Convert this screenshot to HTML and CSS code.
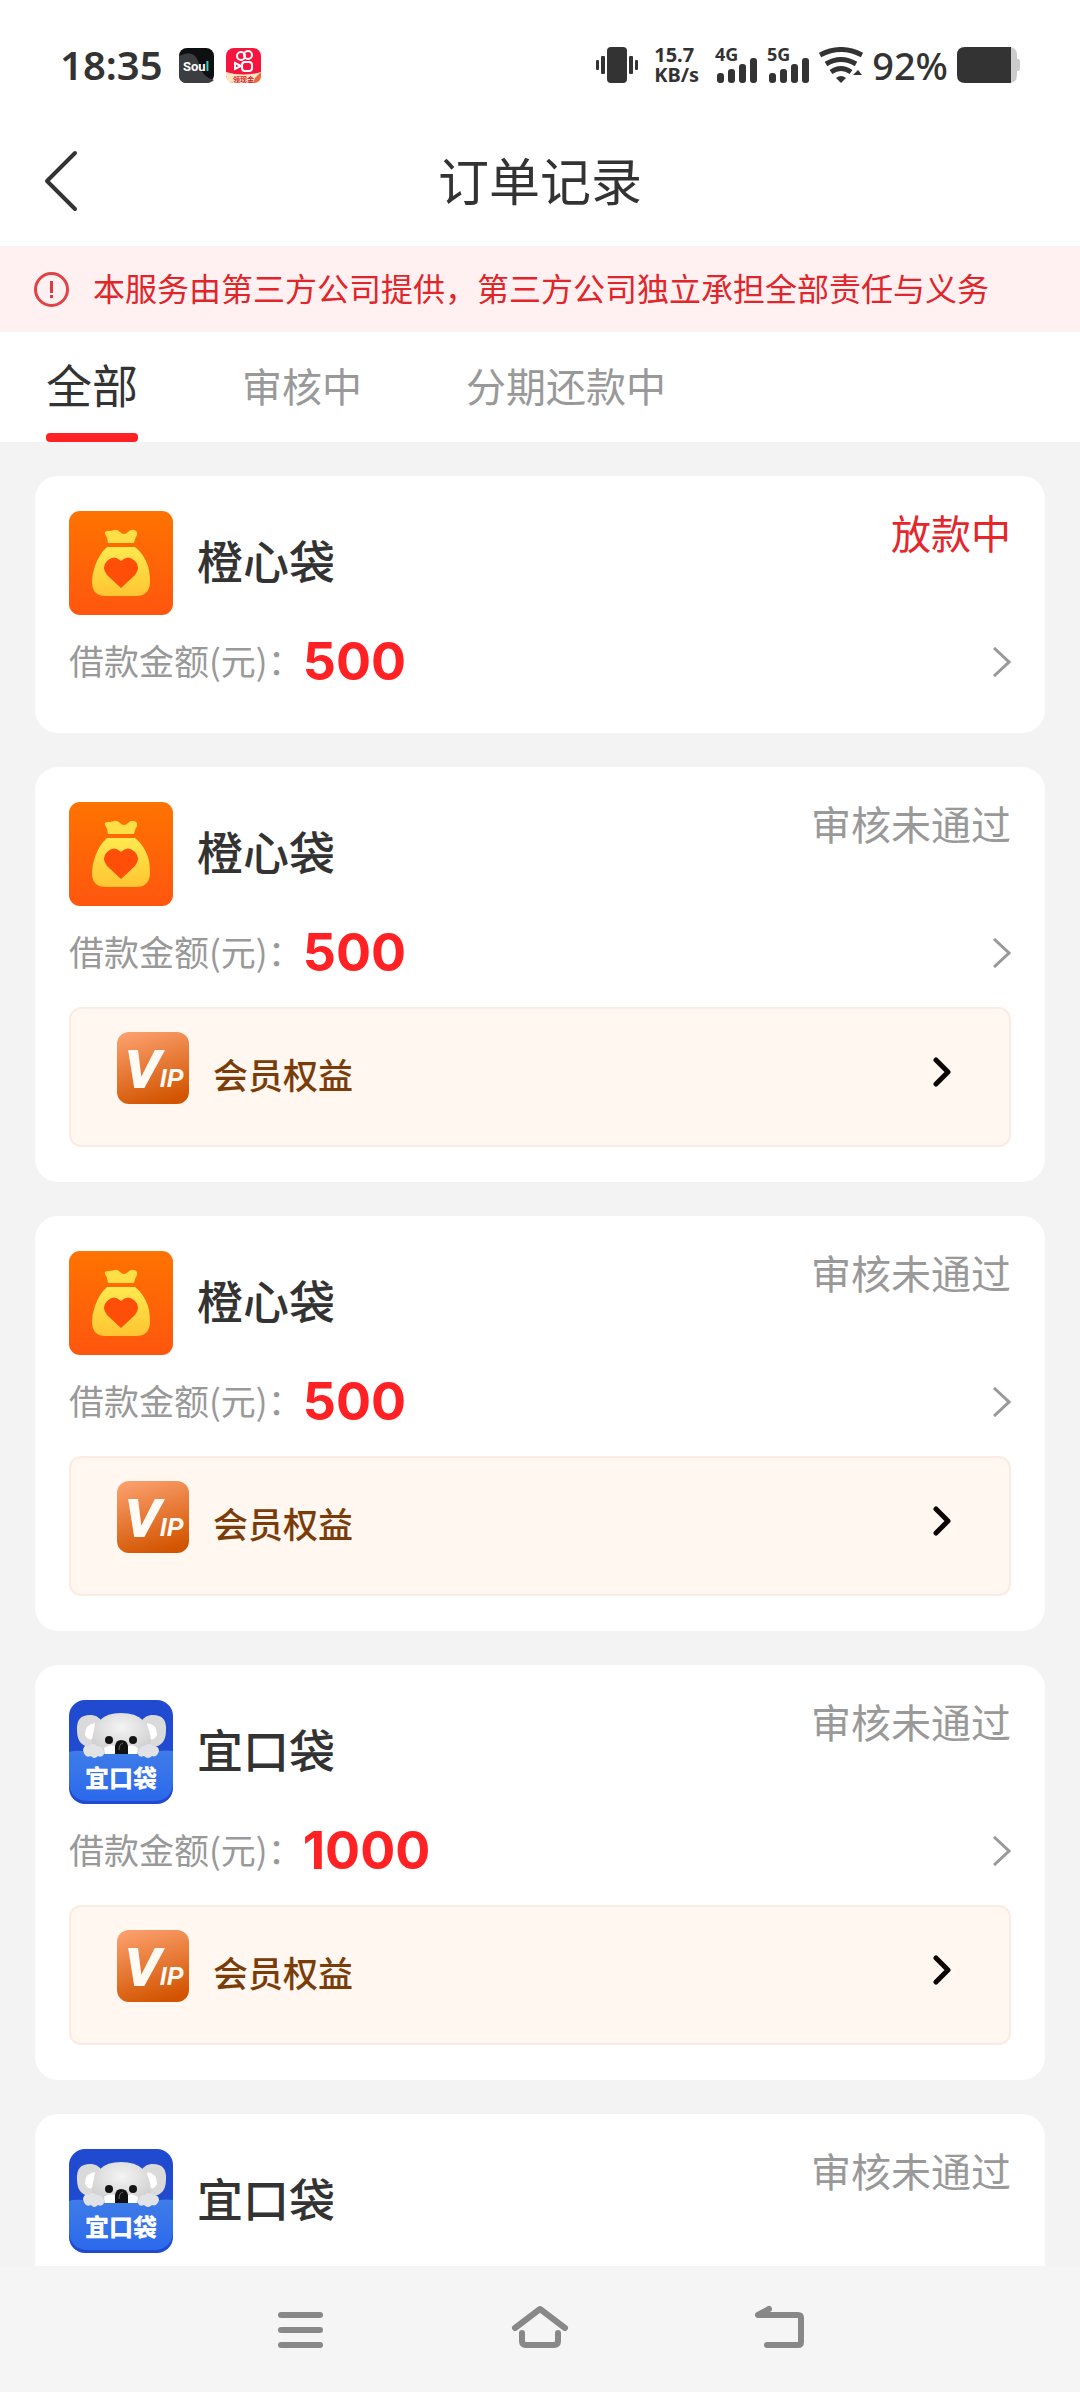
FILE: index.html
```html
<!DOCTYPE html>
<html lang="zh-CN">
<head>
    <meta charset="UTF-8">
    <meta name="viewport" content="width=device-width, initial-scale=1.0">
    <title>订单记录</title>
    <link rel="stylesheet" href="styles.css">
</head>
<body>

    <!-- Shared icons -->
    <svg class="sprite" width="0" height="0" aria-hidden="true">
        <defs>
            <linearGradient id="orangeBg" x1="0" y1="0" x2="0" y2="1">
                <stop offset="0" stop-color="#ff7300"/>
                <stop offset="1" stop-color="#ff560f"/>
            </linearGradient>
            <linearGradient id="bagFill" x1="0" y1="0" x2="0" y2="1">
                <stop offset="0" stop-color="#ffe94f"/>
                <stop offset="1" stop-color="#ffc531"/>
            </linearGradient>
            <linearGradient id="vipBg" x1="0.3" y1="0" x2="0.6" y2="1">
                <stop offset="0" stop-color="#fa9d69"/>
                <stop offset="1" stop-color="#d25400"/>
            </linearGradient>
            <linearGradient id="pocketFill" x1="0" y1="0" x2="0" y2="1">
                <stop offset="0" stop-color="#3e7ce8"/>
                <stop offset="1" stop-color="#2c69ec"/>
            </linearGradient>
            <radialGradient id="furFill" cx="0.5" cy="0.35" r="0.65">
                <stop offset="0" stop-color="#f4f4f4"/>
                <stop offset="1" stop-color="#cfcfd1"/>
            </radialGradient>
        </defs>

        <symbol id="icon-orange" viewBox="0 0 104 104">
            <rect width="104" height="104" rx="11" fill="url(#orangeBg)"/>
            <path d="M36 23 Q35 20 39 20 Q43 20 45 19 Q48 18 51 21 Q55 25 59 21 Q62 18 65 19 Q69 20 68 24 Q66 27 65 32 H39 Q39 27 36 23Z" fill="#ffdf45"/>
            <path d="M38 36 H66 Q75 43 79 55 Q81 62 81 72 Q80 85 67 85 H37 Q23 85 23 71 Q23 63 26 55 Q30 43 38 36Z" fill="url(#bagFill)"/>
            <path d="M52 77 L38 64 Q32 56 38 50 Q45 43 52 50 Q59 43 66 50 Q72 56 66 64Z" fill="#ff4e08"/>
        </symbol>

        <symbol id="icon-koala" viewBox="0 0 104 104">
            <rect width="104" height="104" rx="16" fill="#204bd0"/>
            <path d="M0 52 Q6 50 14 51 H90 Q98 50 104 51 V84 Q102 101 84 101 H20 Q2 101 0 84Z" fill="url(#pocketFill)"/>
            <path d="M8 30 Q7 14 23 15 Q33 16 34 28 L30 48 Q17 48 13 44 Q8 40 8 30Z" fill="#dadadb"/>
            <path d="M97 30 Q98 14 82 15 Q72 16 71 28 L75 48 Q88 48 92 44 Q97 40 97 30Z" fill="#dadadb"/>
            <path d="M16 35 Q16 24 26 23 L24 38 Q20 42 16 35Z" fill="#fff"/>
            <path d="M88 35 Q88 24 78 23 L80 38 Q84 42 88 35Z" fill="#fff"/>
            <path d="M23 42 Q24 13 52 13 Q81 13 82 42 Q81 54 68 54 H36 Q23 54 23 42Z" fill="url(#furFill)"/>
            <path d="M35 48 Q42 43 47 47 L46 54 H36Z M69 48 Q62 43 58 47 L59 54 H68Z" fill="#fff"/>
            <path d="M14 50 Q15 44 20 46 Q24 42 28 46 Q35 46 35 54 Q33 58 29 56 Q25 60 22 56 Q16 59 14 50Z" fill="#e2e3e6"/>
            <path d="M69 54 Q70 46 75 46 Q80 42 84 46 Q90 46 90 51 Q88 58 83 56 Q79 60 75 56 Q70 58 69 54Z" fill="#e2e3e6"/>
            <circle cx="40" cy="40" r="4" fill="#151515"/>
            <circle cx="64" cy="40" r="4" fill="#151515"/>
            <path d="M46 54 V46 Q47 40 52 40 Q58 40 59 46 V54Z" fill="#111"/>
            <path d="M50 50 Q50 44 54 43" stroke="#666" stroke-width="1" fill="none"/>
        </symbol>

        <symbol id="icon-arrow" viewBox="0 0 18 30">
            <path d="M1 1 L16 15 L1 29" fill="none" stroke="#999" stroke-width="3"/>
        </symbol>

        <symbol id="icon-arrow-bold" viewBox="0 0 18 30">
            <path d="M3 3 L15 15 L3 27" fill="none" stroke="#0a0403" stroke-width="5" stroke-linecap="round" stroke-linejoin="round"/>
        </symbol>
    </svg>

    <div class="status-bar">
        <span class="time">18:35</span>
        <svg class="app-icon" width="35" height="35" viewBox="0 0 35 35">
            <rect width="35" height="35" rx="8" fill="#0e0f11"/>
            <path d="M0 8 Q16 0 20 16 Q23 29 35 32 Q32 35 27 35 H8 Q0 35 0 27Z" fill="#3b3d40"/>
            <text class="soul-text" x="4" y="23">Sou<tspan fill="#23d5cb">l</tspan></text>
        </svg>
        <svg class="app-icon" width="35" height="35" viewBox="0 0 35 35">
            <rect width="35" height="35" rx="8" fill="#f5153f"/>
            <path d="M0 24 Q17 29 35 24 V27 Q35 35 27 35 H8 Q0 35 0 27Z" fill="#ffe6c0"/>
            <path d="M35 24 V27 Q35 35 27 35 L29 30Z" fill="#f0663c"/>
            <g fill="none" stroke="#fff" stroke-width="2">
                <circle cx="15" cy="8" r="4"/>
                <circle cx="22" cy="7" r="4"/>
                <rect x="16" y="14" width="10" height="9" rx="3"/>
                <path d="M9 15 L15 18 L9 21Z"/>
            </g>
            <text class="cash-text" x="7" y="34">领现金</text>
        </svg>

        <div class="status-right">
            <svg width="42" height="36" viewBox="0 0 42 36" fill="#333">
                <rect x="11" y="0" width="20" height="36" rx="4"/>
                <rect x="5" y="9" width="4" height="18" rx="1"/>
                <rect x="33" y="9" width="4" height="18" rx="1"/>
                <rect x="0" y="13" width="3" height="10" rx="1"/>
                <rect x="39" y="13" width="3" height="10" rx="1"/>
            </svg>
            <span class="speed">15.7<br>KB/s</span>
            <svg width="43" height="36" viewBox="0 0 43 36" fill="#333">
                <text class="net-text" x="0" y="14">4G</text>
                <rect x="2" y="26" width="7" height="10" rx="3"/>
                <rect x="13" y="22" width="7" height="14" rx="3"/>
                <rect x="24" y="17" width="7" height="19" rx="3"/>
                <rect x="35" y="11" width="7" height="25" rx="3"/>
            </svg>
            <svg width="43" height="36" viewBox="0 0 43 36" fill="#333">
                <text class="net-text" x="0" y="14">5G</text>
                <rect x="2" y="26" width="7" height="10" rx="3"/>
                <rect x="13" y="22" width="7" height="14" rx="3"/>
                <rect x="24" y="17" width="7" height="19" rx="3"/>
                <rect x="35" y="11" width="7" height="25" rx="3"/>
            </svg>
            <svg width="44" height="36" viewBox="0 0 44 36" fill="#333">
                <path d="M1 8 Q22 -3 43 8" fill="none" stroke="#333" stroke-width="5"/>
                <path d="M7 17 Q22 8 37 17" fill="none" stroke="#333" stroke-width="5"/>
                <path d="M12 25 Q22 18 32 25" fill="none" stroke="#333" stroke-width="5"/>
                <path d="M17 31 Q22 27 27 31 L22 36Z"/>
                <path d="M34 28 L39 23 L43 28Z"/>
            </svg>
            <span class="battery-text">92%</span>
            <svg width="63" height="36" viewBox="0 0 63 36">
                <path d="M50 0 H52 Q60 0 60 8 V12 H61 Q63 12 63 14 V22 Q63 24 61 24 H60 V28 Q60 36 52 36 H50Z" fill="#ccc"/>
                <path d="M8 0 H54 V36 H8 Q0 36 0 28 V8 Q0 0 8 0Z" fill="#333"/>
            </svg>
        </div>
    </div>

    <header class="header">
        <button class="back" aria-label="返回">
            <svg width="34" height="62" viewBox="0 0 34 62">
                <path d="M31 3 L3 31 L31 59" fill="none" stroke="#333" stroke-width="4" stroke-linecap="round" stroke-linejoin="round"/>
            </svg>
        </button>
        <h1>订单记录</h1>
    </header>

    <div class="notice">
        <svg width="35" height="35" viewBox="0 0 35 35" fill="#dc3a3c">
            <circle cx="17.5" cy="17.5" r="16" fill="none" stroke="#e04345" stroke-width="3"/>
            <rect x="16" y="9" width="3" height="12"/>
            <rect x="16" y="23" width="3" height="3"/>
        </svg>
        <span>本服务由第三方公司提供，第三方公司独立承担全部责任与义务</span>
    </div>

    <nav class="tabs">
        <button class="tab active">全部</button>
        <button class="tab">审核中</button>
        <button class="tab">分期还款中</button>
    </nav>

    <main class="list">
        <section class="card">
            <div class="card-top">
                <svg class="logo" width="104" height="104"><use href="#icon-orange"/></svg>
                <h2>橙心袋</h2>
                <span class="state lending">放款中</span>
            </div>
            <a class="amount-row" href="#">
                <span class="label">借款金额(元)：</span>
                <span class="amount">500</span>
                <svg class="arrow" width="18" height="30"><use href="#icon-arrow"/></svg>
            </a>
        </section>

        <section class="card">
            <div class="card-top">
                <svg class="logo" width="104" height="104"><use href="#icon-orange"/></svg>
                <h2>橙心袋</h2>
                <span class="state">审核未通过</span>
            </div>
            <a class="amount-row" href="#">
                <span class="label">借款金额(元)：</span>
                <span class="amount">500</span>
                <svg class="arrow" width="18" height="30"><use href="#icon-arrow"/></svg>
            </a>
            <a class="vip" href="#">
                <svg width="72" height="72" viewBox="0 0 72 72">
                    <rect width="72" height="72" rx="12" fill="url(#vipBg)"/>
                    <text class="vip-text" x="8" y="55">V<tspan class="vip-small">IP</tspan></text>
                </svg>
                <span class="vip-label">会员权益</span>
                <svg class="vip-arrow" width="18" height="80"><use href="#icon-arrow-bold"/></svg>
            </a>
        </section>

        <section class="card">
            <div class="card-top">
                <svg class="logo" width="104" height="104"><use href="#icon-orange"/></svg>
                <h2>橙心袋</h2>
                <span class="state">审核未通过</span>
            </div>
            <a class="amount-row" href="#">
                <span class="label">借款金额(元)：</span>
                <span class="amount">500</span>
                <svg class="arrow" width="18" height="30"><use href="#icon-arrow"/></svg>
            </a>
            <a class="vip" href="#">
                <svg width="72" height="72" viewBox="0 0 72 72">
                    <rect width="72" height="72" rx="12" fill="url(#vipBg)"/>
                    <text class="vip-text" x="8" y="55">V<tspan class="vip-small">IP</tspan></text>
                </svg>
                <span class="vip-label">会员权益</span>
                <svg class="vip-arrow" width="18" height="80"><use href="#icon-arrow-bold"/></svg>
            </a>
        </section>

        <section class="card">
            <div class="card-top">
                <svg class="logo" width="104" height="104" viewBox="0 0 104 104">
                    <use href="#icon-koala"/>
                    <text class="koala-text" x="52" y="87">宜口袋</text>
                </svg>
                <h2>宜口袋</h2>
                <span class="state">审核未通过</span>
            </div>
            <a class="amount-row" href="#">
                <span class="label">借款金额(元)：</span>
                <span class="amount">1000</span>
                <svg class="arrow" width="18" height="30"><use href="#icon-arrow"/></svg>
            </a>
            <a class="vip" href="#">
                <svg width="72" height="72" viewBox="0 0 72 72">
                    <rect width="72" height="72" rx="12" fill="url(#vipBg)"/>
                    <text class="vip-text" x="8" y="55">V<tspan class="vip-small">IP</tspan></text>
                </svg>
                <span class="vip-label">会员权益</span>
                <svg class="vip-arrow" width="18" height="80"><use href="#icon-arrow-bold"/></svg>
            </a>
        </section>

        <section class="card">
            <div class="card-top">
                <svg class="logo" width="104" height="104" viewBox="0 0 104 104">
                    <use href="#icon-koala"/>
                    <text class="koala-text" x="52" y="87">宜口袋</text>
                </svg>
                <h2>宜口袋</h2>
                <span class="state">审核未通过</span>
            </div>
        </section>
    </main>

    <!-- System navigation -->
    <footer class="nav-bar">
        <button aria-label="菜单">
            <svg width="58" height="44" viewBox="0 0 58 44" fill="none" stroke="#888" stroke-width="6" stroke-linecap="round">
                <path d="M10 10 H49 M10 25 H49 M10 40 H49"/>
            </svg>
        </button>
        <button aria-label="主页">
            <svg width="58" height="44" viewBox="0 0 58 44" fill="none" stroke="#888" stroke-width="6" stroke-linecap="round" stroke-linejoin="round">
                <path d="M4 23 L29 4 L54 23"/>
                <path d="M11 28 V36 Q11 40 15 40 H43 Q47 40 47 36 V28"/>
            </svg>
        </button>
        <button aria-label="后退">
            <svg width="58" height="44" viewBox="0 0 58 44" fill="none" stroke="#888" stroke-width="6" stroke-linecap="round" stroke-linejoin="round">
                <path d="M18 4 L7 10 H47 Q50 10 50 13 V37 Q50 40 47 40 H16"/>
            </svg>
        </button>
    </footer>

</body>
</html>
```

FILE: styles.css
```css
* {
    box-sizing: border-box;
}
body {
    margin: 0;
    height: 100vh;
    display: flex;
    flex-direction: column;
    background-color: #fff;
    color: #333;
    font-family: "Noto Sans CJK SC", sans-serif;
}
svg {
    display: block;
    flex-shrink: 0;
}
button {
    padding: 0;
    border: none;
    background: none;
    color: inherit;
    font-family: inherit;
    cursor: pointer;
}
a {
    color: inherit;
    text-decoration: none;
}
h1, h2 {
    margin: 0;
}

/* Status bar */
.status-bar {
    display: flex;
    align-items: center;
    padding: 40px 60px 26px;
    height: 116px;
    flex-shrink: 0;
    font-family: "Noto Sans", sans-serif;
}
.time {
    margin-right: 16px;
    font-size: 40px;
    font-weight: 600;
    line-height: 50px;
}
.app-icon {
    margin-right: 12px;
}
.status-right {
    display: flex;
    align-items: center;
    gap: 9px;
    margin-left: auto;
}
.speed {
    margin: 0 7px;
    font-size: 20px;
    font-weight: 700;
    line-height: 20px;
}
.battery-text {
    font-size: 38px;
    font-weight: 500;
    line-height: 50px;
}
.net-text {
    font-size: 18px;
    font-weight: 700;
}
.soul-text {
    fill: #fff;
    font-family: Roboto, sans-serif;
    font-size: 13px;
    font-weight: 700;
}
.cash-text {
    fill: #d8232f;
    font-family: "Noto Sans CJK SC", sans-serif;
    font-size: 7px;
    font-weight: 700;
}

/* Page header */
.header {
    display: grid;
    grid-template-columns: 80px 1fr 80px;
    align-items: center;
    height: 130px;
    flex-shrink: 0;
}
.back {
    padding-left: 44px;
}
.header h1 {
    padding-bottom: 4px;
    text-align: center;
    font-size: 51px;
    font-weight: 400;
}
.notice {
    display: flex;
    align-items: center;
    gap: 24px;
    height: 86px;
    flex-shrink: 0;
    padding: 0 34px;
    background-color: #fff0f1;
    color: #e0262a;
    font-size: 32px;
}
.notice span {
    padding-bottom: 4px;
}

/* Tabs */
.tabs {
    display: flex;
    gap: 104px;
    height: 110px;
    flex-shrink: 0;
    padding: 0 46px;
}
.tab {
    padding-bottom: 4px;
    color: #999;
    font-size: 40px;
}
.tab.active {
    position: relative;
    padding-bottom: 8px;
    color: #333;
    font-size: 46px;
}
.tab.active::after {
    content: "";
    position: absolute;
    left: 0;
    right: 0;
    bottom: 0;
    height: 9px;
    border-radius: 4px;
    background-color: #ff2123;
}

/* Order list */
.list {
    display: flex;
    flex-direction: column;
    gap: 34px;
    flex: 1;
    min-height: 0;
    overflow: hidden;
    padding: 34px 35px 0;
    background-color: #f3f3f3;
}
.card {
    flex-shrink: 0;
    padding: 35px 34px;
    border-radius: 23px;
    background-color: #fff;
}
.card-top {
    display: flex;
    align-items: center;
    gap: 24px;
}
.card-top h2 {
    padding-bottom: 8px;
    font-size: 46px;
    font-weight: 500;
    line-height: 60px;
}
.state {
    align-self: flex-start;
    margin-left: auto;
    color: #999;
    font-size: 40px;
    line-height: 42px;
}
.state.lending {
    color: #e5262a;
}
.amount-row {
    display: flex;
    align-items: center;
    height: 72px;
    margin-top: 11px;
}
.label {
    padding-bottom: 6px;
    color: #999;
    font-size: 35px;
}
.amount {
    color: #ff2123;
    font-family: Inter, sans-serif;
    font-size: 52px;
    font-weight: 700;
    line-height: 72px;
}
.arrow {
    margin-left: auto;
}

/* Member benefits box */
.vip {
    display: flex;
    align-items: flex-start;
    gap: 24px;
    height: 140px;
    margin-top: 18px;
    padding: 23px 58px 23px 46px;
    border: 2px solid #fbebe2;
    border-radius: 12px;
    background-color: #fff7f0;
}
.vip-label {
    color: #7a3d0a;
    font-size: 35px;
    font-weight: 500;
    line-height: 84px;
}
.vip-arrow {
    margin-left: auto;
}
.vip-text {
    fill: #fffaf3;
    stroke: #fffaf3;
    stroke-width: 2px;
    font-family: "Liberation Sans", sans-serif;
    font-size: 52px;
    font-weight: 700;
    font-style: italic;
}
.vip-small {
    stroke-width: 0;
    font-size: 25px;
}
.koala-text {
    fill: #fff;
    text-anchor: middle;
    font-size: 24px;
    font-weight: 900;
}

/* System navigation */
.nav-bar {
    display: flex;
    justify-content: center;
    height: 126px;
    flex-shrink: 0;
    padding-bottom: 4px;
    background-color: #f5f5f5;
}
.nav-bar button {
    display: flex;
    align-items: center;
    justify-content: center;
    width: 240px;
}
```
